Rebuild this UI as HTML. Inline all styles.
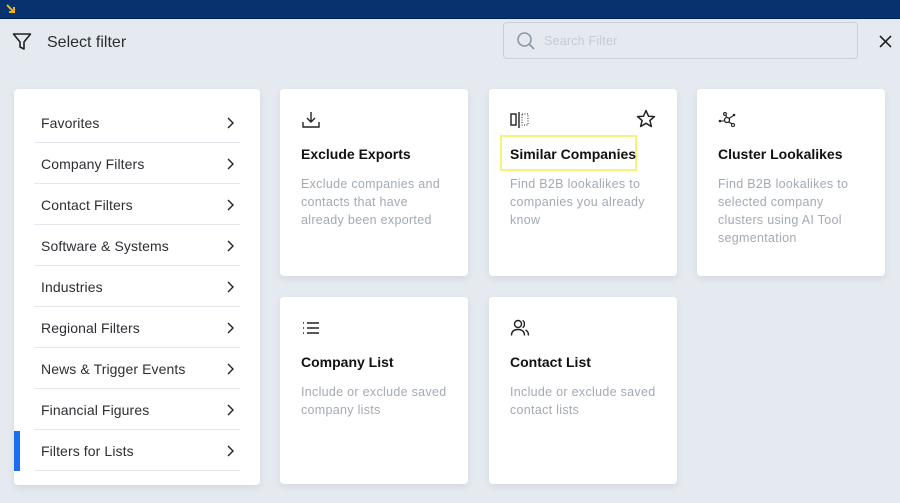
<!DOCTYPE html>
<html><head><style>
*{margin:0;padding:0;box-sizing:border-box}
body{width:900px;height:503px;background:#e5eaf1;font-family:"Liberation Sans",sans-serif;position:relative;overflow:hidden;color:#1f2328}
.top{position:absolute;left:0;top:0;width:900px;height:19px;background:#07326e;border-bottom:1px solid #02205a}
.title{position:absolute;left:47px;top:34px;font-size:16px;color:#2b2f33}
.search{position:absolute;left:503px;top:22px;width:355px;height:37px;border:1px solid #c8d0d8;border-radius:4px}
.search span{position:absolute;left:40px;top:11px;font-size:12.5px;color:#c3cbd3;letter-spacing:.2px}
.panel{position:absolute;left:14px;top:89px;width:246px;height:396px;background:#fff;border-radius:4px;box-shadow:0 3px 8px rgba(0,0,0,.08)}
.row{position:absolute;left:20px;width:206px;height:41px;border-bottom:1px solid #e4e8ee;font-size:14px;color:#2b2f33;line-height:43px;padding-left:7px;letter-spacing:.1px}
.row svg{position:absolute;right:6px;top:15px}
.card{position:absolute;width:188px;height:187px;background:#fff;border-radius:4px;box-shadow:0 3px 8px rgba(0,0,0,.08)}
.card h3{position:absolute;left:21px;top:57px;font-size:14px;font-weight:bold;color:#111}
.card p{position:absolute;left:21px;top:86px;width:148px;font-size:12.5px;line-height:18px;color:#a2aab3;letter-spacing:.3px}
.card svg.ic{position:absolute;left:21px;top:21px}
</style></head><body>
<div class="top"><svg style="position:absolute;left:5px;top:3px" width="12" height="12" viewBox="0 0 12 12"><path d="M2 2L9 9M9 4V9H4" stroke="#f2b400" stroke-width="2" fill="none"/></svg></div>
<svg style="position:absolute;left:12px;top:32px" width="20" height="20" viewBox="0 0 20 20"><path d="M1.5 2H18.5L12 10V17L8 15V10Z" stroke="#222" stroke-width="1.6" fill="none" stroke-linejoin="round"/></svg>
<div class="title">Select filter</div>
<div class="search"><svg style="position:absolute;left:12px;top:8px" width="20" height="20" viewBox="0 0 20 20"><circle cx="8.5" cy="8.5" r="6.5" stroke="#8a98a3" stroke-width="1.6" fill="none"/><path d="M13 13L18 18" stroke="#8a98a3" stroke-width="1.6"/></svg><span>Search Filter</span></div>
<svg style="position:absolute;left:879px;top:35px" width="13" height="13" viewBox="0 0 13 13"><path d="M1 1L12 12M12 1L1 12" stroke="#222" stroke-width="1.6"/></svg>
<div class="panel">
<div class="row" style="top:13px">Favorites<svg width="8" height="12" viewBox="0 0 8 12"><path d="M2 1L7 6L2 11" stroke="#222" stroke-width="1.4" fill="none"/></svg></div>
<div class="row" style="top:54px">Company Filters<svg width="8" height="12" viewBox="0 0 8 12"><path d="M2 1L7 6L2 11" stroke="#222" stroke-width="1.4" fill="none"/></svg></div>
<div class="row" style="top:95px">Contact Filters<svg width="8" height="12" viewBox="0 0 8 12"><path d="M2 1L7 6L2 11" stroke="#222" stroke-width="1.4" fill="none"/></svg></div>
<div class="row" style="top:136px">Software &amp; Systems<svg width="8" height="12" viewBox="0 0 8 12"><path d="M2 1L7 6L2 11" stroke="#222" stroke-width="1.4" fill="none"/></svg></div>
<div class="row" style="top:177px">Industries<svg width="8" height="12" viewBox="0 0 8 12"><path d="M2 1L7 6L2 11" stroke="#222" stroke-width="1.4" fill="none"/></svg></div>
<div class="row" style="top:218px">Regional Filters<svg width="8" height="12" viewBox="0 0 8 12"><path d="M2 1L7 6L2 11" stroke="#222" stroke-width="1.4" fill="none"/></svg></div>
<div class="row" style="top:259px">News &amp; Trigger Events<svg width="8" height="12" viewBox="0 0 8 12"><path d="M2 1L7 6L2 11" stroke="#222" stroke-width="1.4" fill="none"/></svg></div>
<div class="row" style="top:300px">Financial Figures<svg width="8" height="12" viewBox="0 0 8 12"><path d="M2 1L7 6L2 11" stroke="#222" stroke-width="1.4" fill="none"/></svg></div>
<div class="row" style="top:341px">Filters for Lists<svg width="8" height="12" viewBox="0 0 8 12"><path d="M2 1L7 6L2 11" stroke="#222" stroke-width="1.4" fill="none"/></svg></div>
<div style="position:absolute;left:0;top:342px;width:6px;height:40px;background:#1a6cf0"></div>
</div>
<div class="card" style="left:280px;top:89px"><svg class="ic" width="20" height="20" viewBox="0 0 20 20"><path d="M10 2V12M6 8L10 12L14 8M2 12V17H18V12" stroke="#222" stroke-width="1.4" fill="none"/></svg><h3>Exclude Exports</h3><p>Exclude companies and contacts that have already been exported</p></div>
<div class="card" style="left:489px;top:89px"><svg class="ic" width="20" height="20" viewBox="0 0 20 20"><rect x="1" y="4" width="5" height="11" stroke="#222" stroke-width="1.4" fill="none"/><path d="M9 2V18" stroke="#222" stroke-width="1.4"/><rect x="12" y="4" width="6" height="11" stroke="#222" stroke-width="1" stroke-dasharray="1 1.5" fill="none"/></svg><svg style="position:absolute;left:147px;top:20px" width="20" height="20" viewBox="0 0 20 20"><path d="M10 1.5L12.5 7.2L18.5 7.6L13.9 11.5L15.4 17.5L10 14.3L4.6 17.5L6.1 11.5L1.5 7.6L7.5 7.2Z" stroke="#222" stroke-width="1.5" fill="none" stroke-linejoin="round"/></svg><div style="position:absolute;left:11px;top:46px;width:137px;height:36px;border:2px solid #f4f47a"></div><h3>Similar Companies</h3><p>Find B2B lookalikes to companies you already know</p></div>
<div class="card" style="left:697px;top:89px"><svg class="ic" width="20" height="20" viewBox="0 0 20 20"><circle cx="2" cy="11" r="1.3" fill="#222"/><circle cx="9" cy="10" r="2.5" stroke="#222" stroke-width="1.3" fill="none"/><circle cx="7" cy="4" r="1.4" stroke="#222" stroke-width="1.1" fill="none"/><circle cx="16" cy="5" r="1.3" fill="#222"/><circle cx="15" cy="15" r="1.5" stroke="#222" stroke-width="1.1" fill="none"/><path d="M3 11H6.5M8 5.5L8.5 7.5M11 8.5L15 5.8M11 12L14 14" stroke="#222" stroke-width="1.1"/></svg><h3>Cluster Lookalikes</h3><p style="width:138px">Find B2B lookalikes to selected company clusters using AI Tool segmentation</p></div>
<div class="card" style="left:280px;top:297px"><svg class="ic" width="20" height="20" viewBox="0 0 20 20"><path d="M6 5H18M6 10H18M6 15H18" stroke="#222" stroke-width="1.4"/><path d="M2 5H3M2 10H3M2 15H3" stroke="#222" stroke-width="1.4"/></svg><h3>Company List</h3><p>Include or exclude saved company lists</p></div>
<div class="card" style="left:489px;top:297px"><svg class="ic" width="20" height="20" viewBox="0 0 20 20"><circle cx="8" cy="6" r="3.5" stroke="#222" stroke-width="1.4" fill="none"/><path d="M1.5 17.5C1.5 13 4.5 11.5 8 11.5S14.5 13 14.5 17.5M12.5 2.5C15 3 15 9 12.5 9.5M15.5 12C18 13 18.5 15 18.5 17.5" stroke="#222" stroke-width="1.4" fill="none"/></svg><h3>Contact List</h3><p>Include or exclude saved contact lists</p></div>
</body></html>
